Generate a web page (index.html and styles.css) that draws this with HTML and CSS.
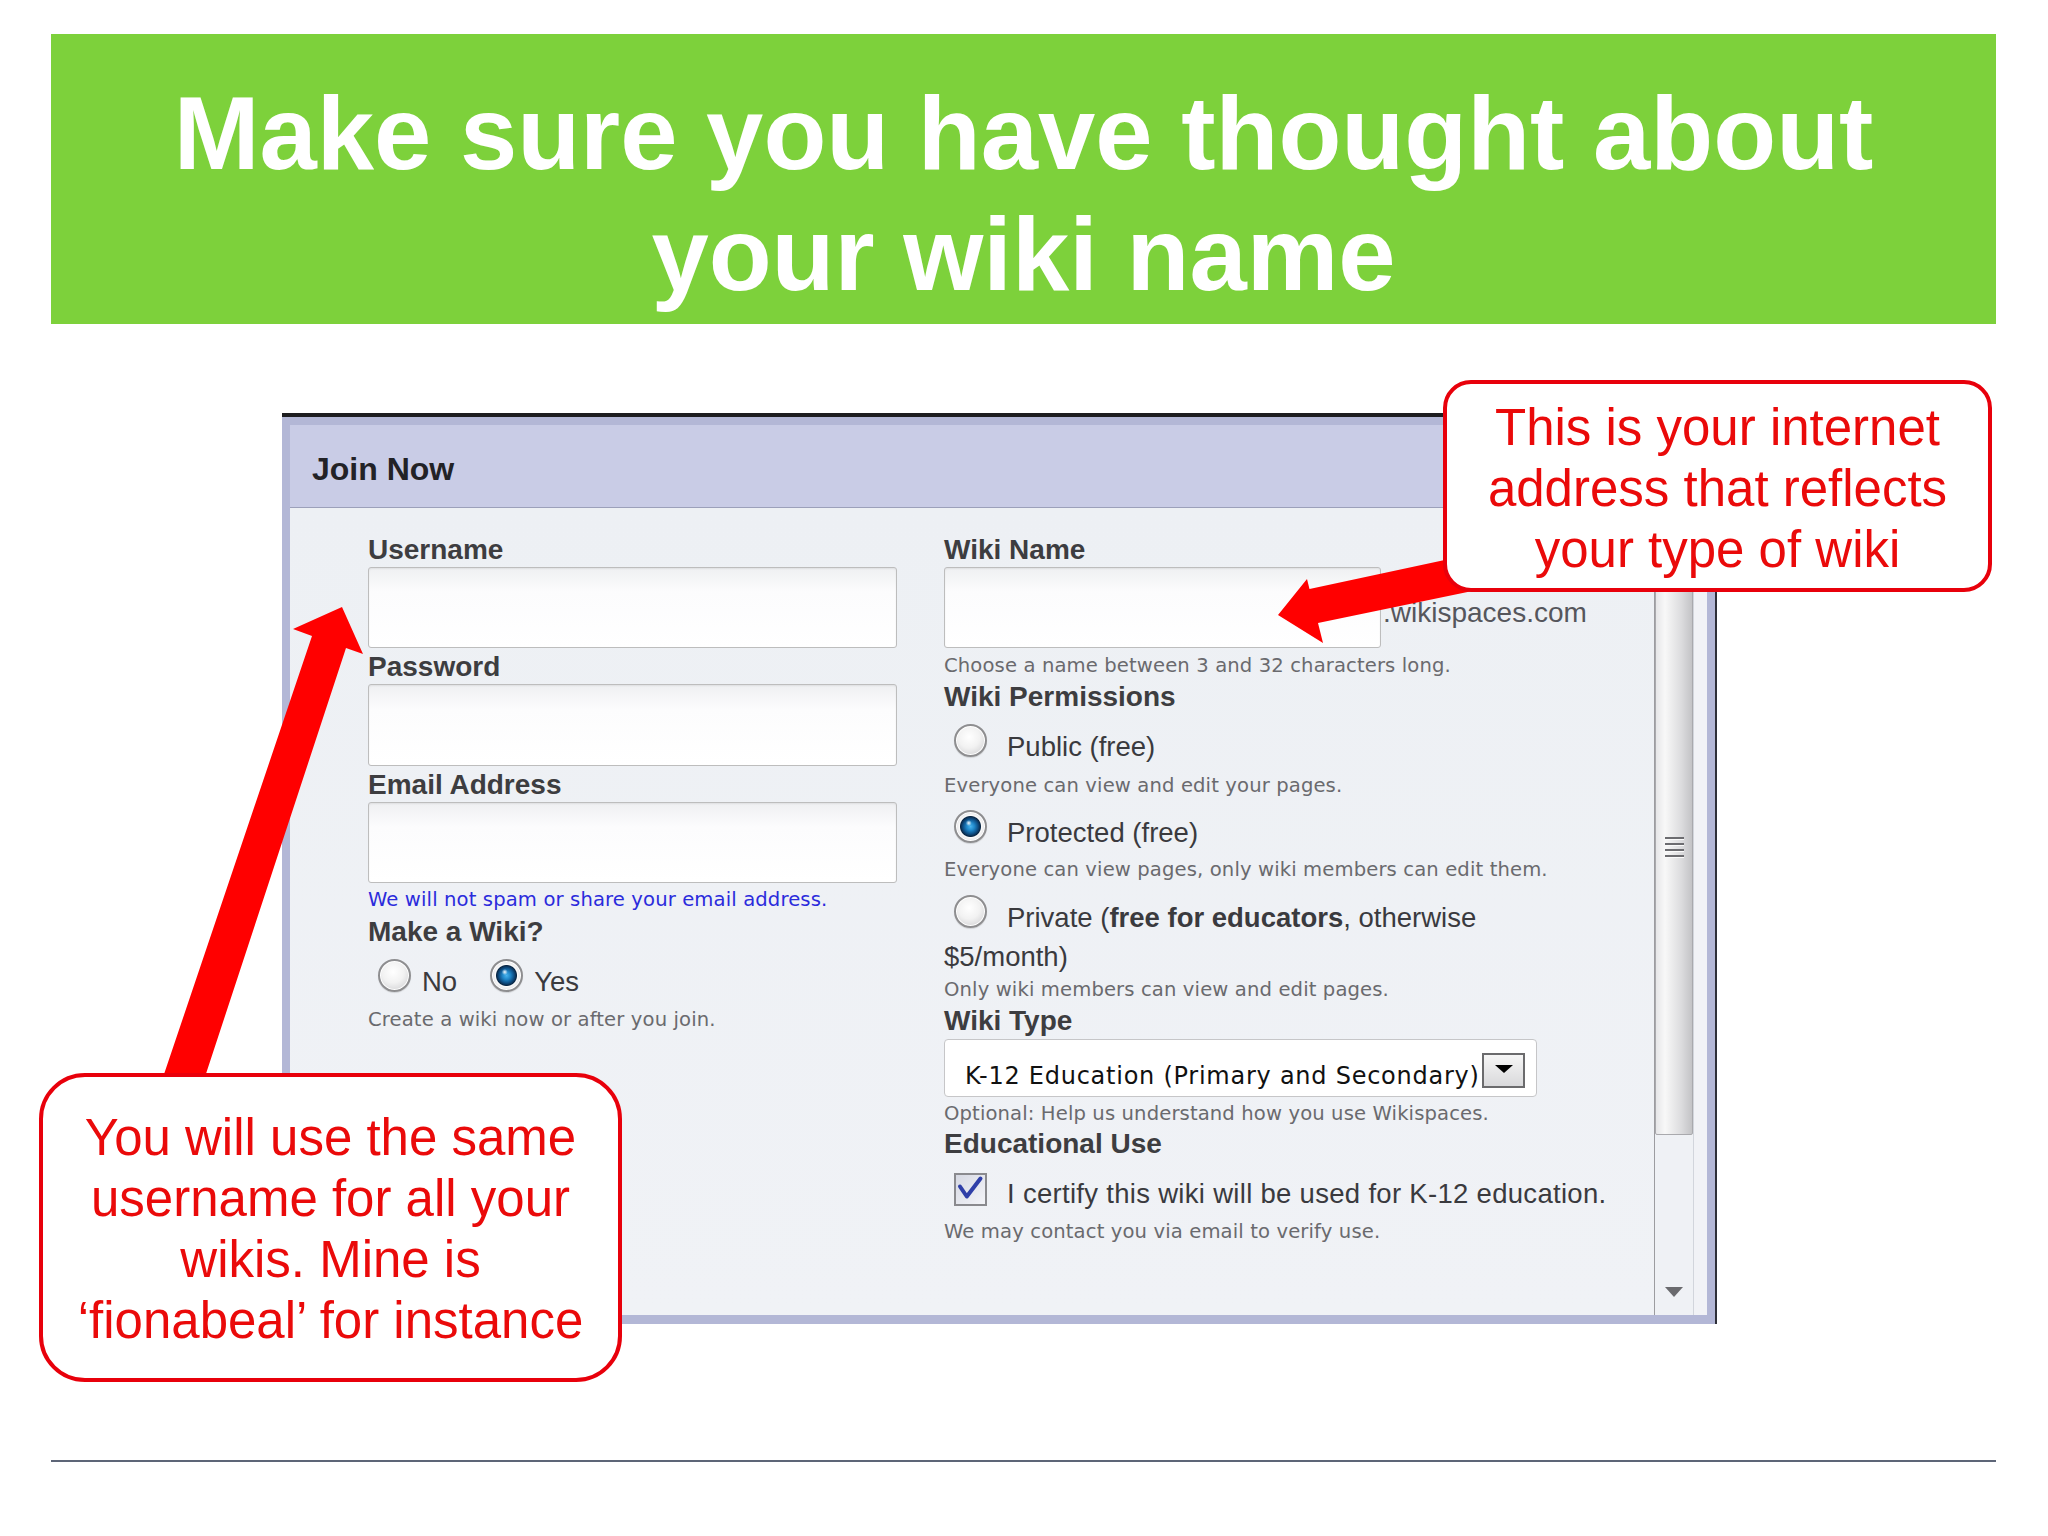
FILE: index.html
```html
<!DOCTYPE html>
<html lang="en">
<head>
<meta charset="utf-8">
<title>Make sure you have thought about your wiki name</title>
<link rel="stylesheet" href="styles.css">
</head>
<body>
<div class="slide">
  <header class="title-bar">
    <h1 class="title">Make sure you have thought about<br>your wiki name</h1>
  </header>

  <section class="window">
    <div class="win-head">Join Now</div>
    <div class="win-body">
      <div class="form">
        <div class="col col-left">
          <div class="label">Username</div>
          <div class="input"></div>
          <div class="label s-label">Password</div>
          <div class="input tall"></div>
          <div class="label s-label">Email Address</div>
          <div class="input"></div>
          <div class="hint note s-hint-a">We will not spam or share your email address.</div>
          <div class="label s-label-b">Make a Wiki?</div>
          <div class="choice-row s-row-a">
            <span class="choice tight"><span class="radio"></span><span class="opt">No</span></span>
            <span class="choice tight yes"><span class="radio on"></span><span class="opt">Yes</span></span>
          </div>
          <div class="hint s-hint-b">Create a wiki now or after you join.</div>
        </div>

        <div class="col col-right">
          <div class="label">Wiki Name</div>
          <div class="name-row">
            <div class="input wiki-input"></div>
            <span class="domain">.wikispaces.com</span>
          </div>
          <div class="hint s-hint-c">Choose a name between 3 and 32 characters long.</div>
          <div class="label s-label-c">Wiki Permissions</div>
          <div class="choice-row s-row-a"><span class="radio"></span><span class="opt">Public (free)</span></div>
          <div class="hint s-hint-d">Everyone can view and edit your pages.</div>
          <div class="choice-row s-row-b"><span class="radio on"></span><span class="opt">Protected (free)</span></div>
          <div class="hint s-hint-e">Everyone can view pages, only wiki members can edit them.</div>
          <div class="choice-row s-row-c"><span class="radio"></span><span class="opt">Private (<b>free for educators</b>, otherwise</span></div>
          <div class="cont">$5/month)</div>
          <div class="hint s-hint-f">Only wiki members can view and edit pages.</div>
          <div class="label s-label-c">Wiki Type</div>
          <div class="select">
            <span class="select-text">K-12 Education (Primary and Secondary)</span>
            <span class="select-btn"><span class="tri"></span></span>
          </div>
          <div class="hint s-hint-a">Optional: Help us understand how you use Wikispaces.</div>
          <div class="label s-label-d">Educational Use</div>
          <div class="check-row">
            <span class="checkbox"><svg viewBox="0 0 29 29" width="29" height="29"><path d="M4 11.5 L10.8 21.5 L24.5 3.5" fill="none" stroke="#2f3fa8" stroke-width="4" stroke-linejoin="round" stroke-linecap="round"/></svg></span>
            <span class="opt wide">I certify this wiki will be used for K-12 education.</span>
          </div>
          <div class="hint s-hint-g">We may contact you via email to verify use.</div>
        </div>
      </div>

      <div class="scrollbar">
        <div class="sb-main">
          <div class="sb-thumb"><span class="grip"></span></div>
          <div class="sb-fill"></div>
          <span class="sb-down"></span>
        </div>
        <div class="sb-side"></div>
      </div>
    </div>
  </section>

  <div class="rule"></div>

  <svg class="arrows" viewBox="0 0 2048 1536" width="2048" height="1536" aria-hidden="true">
    <polygon fill="#ff0000" points="342,607 293,629 312,636 158,1092 200,1092 346,648 363,654"/>
    <polygon fill="#ff0000" points="1278,615 1307,579 1309.5,589 1482,552 1482,589 1318,623 1323,643"/>
  </svg>

  <div class="callout callout-right">This is your internet<br>address that reflects<br>your type of wiki</div>
  <div class="callout callout-left">You will use the same<br>username for all your<br>wikis. Mine is<br>‘fionabeal’ for instance</div>
</div>
</body>
</html>
```

FILE: styles.css
```css
html, body {
  margin: 0;
  padding: 0;
  background: #ffffff;
}

.slide {
  position: relative;
  width: 2048px;
  height: 1536px;
  overflow: hidden;
  display: flow-root;
  background: #ffffff;
  font-family: "Liberation Sans", Arial, sans-serif;
}

/* ---------- title ---------- */
.title-bar {
  margin: 34px 0 0 51px;
  width: 1945px;
  height: 290px;
  box-sizing: border-box;
  padding-top: 39px;
  background: #7dd13b;
}

.title {
  margin: 0;
  font: bold 103px/121px "Liberation Sans", Arial, sans-serif;
  color: #ffffff;
  text-align: center;
  white-space: nowrap;
}

/* ---------- window ---------- */
.window {
  margin: 89px 0 0 282px;
  width: 1435px;
  height: 911px;
  box-sizing: border-box;
  border-top: 4px solid #1d1d1f;
  border-right: 2px solid #2e2f38;
  background: #b3b7d6;
  padding: 8px 8px 9px 8px;
  display: flex;
  flex-direction: column;
}

.win-head {
  flex: none;
  height: 83px;
  box-sizing: border-box;
  background: #c9cce6;
  border-bottom: 1px solid #9ca0ba;
  padding: 28px 0 0 22px;
  font: bold 32px/32px "Liberation Sans", Arial, sans-serif;
  color: #222226;
}

.win-body {
  flex: 1;
  display: flex;
  background: linear-gradient(#edf0f4, #f0f2f6);
}

.form {
  flex: 1;
  display: flex;
  gap: 47px;
  padding: 26.3px 0 0 78px;
}

.col-left {
  width: 529px;
  flex: none;
}

.col-right {
  flex: 1;
}

.label {
  font: bold 28px/32px "Liberation Sans", Arial, sans-serif;
  color: #3d3d40;
  white-space: nowrap;
}

.input {
  height: 81px;
  margin-top: 0.7px;
  box-sizing: border-box;
  border: 1px solid #bdbdbd;
  border-radius: 3px;
  background: linear-gradient(#eff0f2, #fcfcfd 30%, #ffffff);
  box-shadow: inset 0 1px 2px rgba(0, 0, 0, 0.07);
}

.input.tall {
  height: 82px;
}

.hint {
  font: 19.6px/24px "DejaVu Sans", Verdana, sans-serif;
  letter-spacing: 0.12px;
  color: #6a6a6e;
  white-space: nowrap;
}

.note {
  color: #2b2bdc;
}

.opt, .cont, .domain {
  font: 27.5px/32px "Liberation Sans", Arial, sans-serif;
  color: #3a3a3e;
  white-space: nowrap;
}

.opt.wide {
  letter-spacing: 0.3px;
}

.opt b {
  font-weight: bold;
}

/* spacing between rows */
.s-label { margin-top: 3.3px; }
.s-label-b { margin-top: 4.1px; }
.s-label-c { margin-top: 3.1px; }
.s-label-d { margin-top: 2.1px; }
.s-hint-a { margin-top: 5.2px; }
.s-hint-b { margin-top: 9.7px; }
.s-hint-c { margin-top: 6.2px; }
.s-hint-d { margin-top: 10.7px; }
.s-hint-e { margin-top: 8.7px; }
.s-hint-f { margin-top: 4.75px; }
.s-hint-g { margin-top: 9.75px; }
.s-row-a { margin-top: 11.2px; }
.s-row-b { margin-top: 12.3px; }
.s-row-c { margin-top: 13.3px; }

/* radios */
.choice-row {
  display: flex;
  align-items: flex-start;
  padding-left: 10px;
  gap: 20px;
}

.choice-row .opt {
  padding-top: 7px;
}

.choice {
  display: flex;
  align-items: flex-start;
}

.choice.tight {
  gap: 11px;
}

.col-left .choice-row {
  gap: 0;
}

.choice.yes {
  margin-left: 33px;
}

.radio {
  flex: none;
  width: 33px;
  height: 33px;
  box-sizing: border-box;
  border-radius: 50%;
  border: 2px solid #8e8e90;
  background: radial-gradient(circle at 45% 38%, #ffffff 0%, #f2f2f2 45%, #c8c8cb 100%);
  box-shadow: inset 0 0 0 1px #ffffff, 0 1px 1px rgba(0, 0, 0, 0.12);
}

.radio.on {
  background:
    radial-gradient(circle at 44% 38%, rgba(255, 255, 255, 0.95) 0, rgba(255, 255, 255, 0) 3px),
    radial-gradient(circle at 50% 50%, #48b4ee 0, #1f86c8 4px, #0e4f86 7.5px, #0a2745 10px, #fafafa 11px, #e2e2e5 14.5px);
}

.cont {
  margin-top: 6.95px;
}

/* wiki name row */
.name-row {
  display: flex;
  align-items: flex-start;
  margin-top: 0.7px;
}

.wiki-input {
  width: 437px;
  margin-top: 0;
  flex: none;
}

.domain {
  margin: 30.3px 0 0 2px;
  font-size: 28px;
  color: #55565c;
}

/* select */
.select {
  margin-top: 1.7px;
  width: 593px;
  height: 58px;
  box-sizing: border-box;
  border: 1px solid #c6c6c8;
  border-radius: 4px;
  background: #ffffff;
  display: flex;
  align-items: flex-start;
  padding: 0 11px 0 20px;
}

.select-text {
  flex: 1;
  padding-top: 21.7px;
  font: 24px/28px "DejaVu Sans", Verdana, sans-serif;
  letter-spacing: 0.75px;
  color: #111111;
  white-space: nowrap;
  overflow: hidden;
}

.select-btn {
  flex: none;
  width: 43px;
  height: 35px;
  margin-top: 13px;
  box-sizing: border-box;
  border: 2px solid #6b6b6d;
  background: linear-gradient(#f6f6f6, #d9d9db);
  display: flex;
  justify-content: center;
  align-items: center;
}

.tri {
  width: 0;
  height: 0;
  border-left: 9px solid transparent;
  border-right: 9px solid transparent;
  border-top: 8px solid #000000;
  margin-top: -2px;
}

/* checkbox */
.check-row {
  margin-top: 12.7px;
  display: flex;
  align-items: flex-start;
  gap: 20px;
  padding-left: 10px;
}

.check-row .opt {
  padding-top: 5.45px;
}

.checkbox {
  flex: none;
  width: 33px;
  height: 33px;
  box-sizing: border-box;
  border: 2px solid #8a8a8e;
  background: linear-gradient(135deg, #d6d9e3, #f3f4f8);
  display: flex;
}

.checkbox svg {
  display: block;
}

/* scrollbar */
.scrollbar {
  flex: none;
  width: 53px;
  box-sizing: border-box;
  border-left: 1px solid #9c9ca0;
  display: flex;
  background: #eff1f5;
}

.sb-main {
  width: 38px;
  flex: none;
  display: flex;
  flex-direction: column;
  align-items: center;
}

.sb-thumb {
  margin-top: 50px;
  width: 38px;
  height: 577px;
  flex: none;
  box-sizing: border-box;
  border: 1px solid #a9a9ad;
  border-radius: 2px;
  background: linear-gradient(90deg, #e6e6e8, #f8f8f8 25%, #dcdcde 70%, #c3c3c6);
  display: flex;
  justify-content: center;
  align-items: center;
}

.grip {
  width: 19px;
  height: 21px;
  margin-top: 2px;
  background: repeating-linear-gradient(#6c6c70 0 2px, #fafafa 2px 3px, transparent 3px 6px);
}

.sb-fill {
  flex: 1;
}

.sb-down {
  flex: none;
  width: 0;
  height: 0;
  margin-bottom: 18px;
  border-left: 9px solid transparent;
  border-right: 9px solid transparent;
  border-top: 10px solid #6a6a6e;
}

.sb-side {
  flex: 1;
  border-left: 1px solid #d2d5dc;
  background: #f1f2f6;
}

/* bottom rule */
.rule {
  margin: 136px 0 0 51px;
  width: 1945px;
  height: 0;
  border-top: 2px solid #5d6577;
}

/* overlays */
.arrows {
  position: absolute;
  left: 0;
  top: 0;
  pointer-events: none;
}

.callout {
  position: absolute;
  box-sizing: border-box;
  border: 4px solid #e8000b;
  background: #ffffff;
  color: #ea0a0a;
  font: 51px/61px "Liberation Sans", Arial, sans-serif;
  text-align: center;
  white-space: nowrap;
}

.callout-right {
  left: 1443px;
  top: 380px;
  width: 549px;
  height: 212px;
  border-radius: 28px;
  padding-top: 13px;
}

.callout-left {
  left: 39px;
  top: 1073px;
  width: 583px;
  height: 309px;
  border-radius: 46px;
  padding-top: 30px;
}
```
